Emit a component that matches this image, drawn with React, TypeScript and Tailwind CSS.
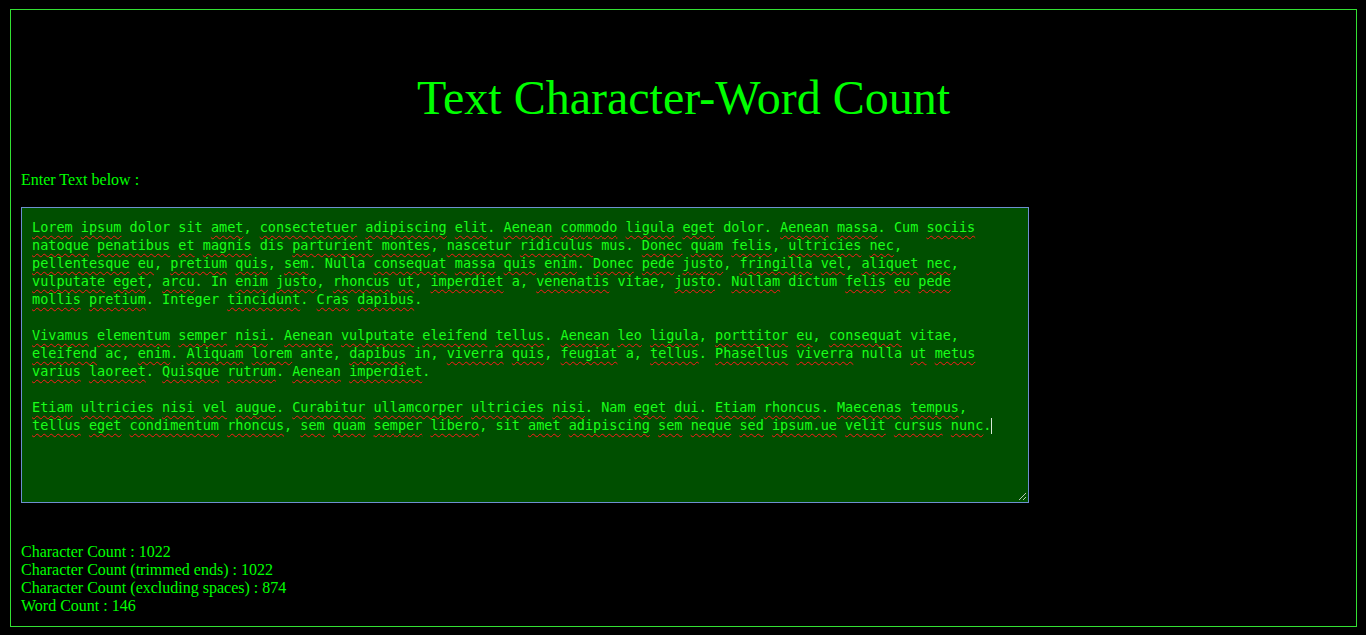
import React from "react";

const LINES: string[] = [
  "Lorem ipsum dolor sit amet, consectetuer adipiscing elit. Aenean commodo ligula eget dolor. Aenean massa. Cum sociis",
  "natoque penatibus et magnis dis parturient montes, nascetur ridiculus mus. Donec quam felis, ultricies nec,",
  "pellentesque eu, pretium quis, sem. Nulla consequat massa quis enim. Donec pede justo, fringilla vel, aliquet nec,",
  "vulputate eget, arcu. In enim justo, rhoncus ut, imperdiet a, venenatis vitae, justo. Nullam dictum felis eu pede",
  "mollis pretium. Integer tincidunt. Cras dapibus.",
  "",
  "Vivamus elementum semper nisi. Aenean vulputate eleifend tellus. Aenean leo ligula, porttitor eu, consequat vitae,",
  "eleifend ac, enim. Aliquam lorem ante, dapibus in, viverra quis, feugiat a, tellus. Phasellus viverra nulla ut metus",
  "varius laoreet. Quisque rutrum. Aenean imperdiet.",
  "",
  "Etiam ultricies nisi vel augue. Curabitur ullamcorper ultricies nisi. Nam eget dui. Etiam rhoncus. Maecenas tempus,",
  "tellus eget condimentum rhoncus, sem quam semper libero, sit amet adipiscing sem neque sed ipsum.ue velit cursus nunc.",
];

const OK = new Set([
  "dolor", "sit", "Cum", "dis", "mus", "Nulla", "In", "a", "vitae", "dictum",
  "Integer", "ac", "ante", "in", "nulla", "Nam",
]);

function Line({ text, last }: { text: string; last: boolean }) {
  if (text === "") return <div className="h-[18px]" />;
  const tokens = text.split(" ");
  return (
    <div className="h-[18px] whitespace-nowrap">
      {tokens.map((tok, i) => {
        const m = tok.match(/^(.*?)([.,]?)$/);
        const core = m ? m[1] : tok;
        const punct = m ? m[2] : "";
        const bad = !OK.has(core);
        return (
          <React.Fragment key={i}>
            {i > 0 ? " " : ""}
            {bad ? (
              <span className="underline decoration-wavy decoration-[#ff1a1a] decoration-1 underline-offset-[3px]">
                {core}
              </span>
            ) : (
              core
            )}
            {punct}
          </React.Fragment>
        );
      })}
      {last ? (
        <span className="inline-block w-px h-[16px] bg-[#d8e8d8] align-[-4px]" />
      ) : null}
    </div>
  );
}

export default function App() {
  return (
    <div className="w-full h-[635px] bg-black pt-[9px] pl-[10px] font-['Liberation_Serif',serif] text-[#00ff00]">
      <div className="box-border w-[1347px] h-[618px] border border-[#33e033] px-[10px] pt-[60px]">
        <h1 className="text-center text-[48px] leading-[56px] font-normal">
          Text Character-Word Count
        </h1>
        <div className="mt-[45px] text-[16px] leading-[18px]">Enter Text below :</div>
        <div className="relative mt-[18px] box-border w-[1008px] h-[296px] border border-[#6d8fd0] bg-[#004f00] p-[10px] font-['DejaVu_Sans_Mono',monospace] text-[13.5px] leading-[18px] text-[#1aff1a]">
          {LINES.map((l, i) => (
            <Line key={i} text={l} last={i === LINES.length - 1} />
          ))}
          <svg
            className="absolute right-[1px] bottom-[1px]"
            width="10"
            height="10"
            viewBox="0 0 10 10"
          >
            <line x1="9" y1="2" x2="2" y2="9" stroke="#b8c8b8" strokeWidth="1" />
            <line x1="9" y1="6" x2="6" y2="9" stroke="#b8c8b8" strokeWidth="1" />
          </svg>
        </div>
        <div className="mt-[40px] text-[16px] leading-[18px]">
          <div>Character Count : 1022</div>
          <div>Character Count (trimmed ends) : 1022</div>
          <div>Character Count (excluding spaces) : 874</div>
          <div>Word Count : 146</div>
        </div>
      </div>
    </div>
  );
}
